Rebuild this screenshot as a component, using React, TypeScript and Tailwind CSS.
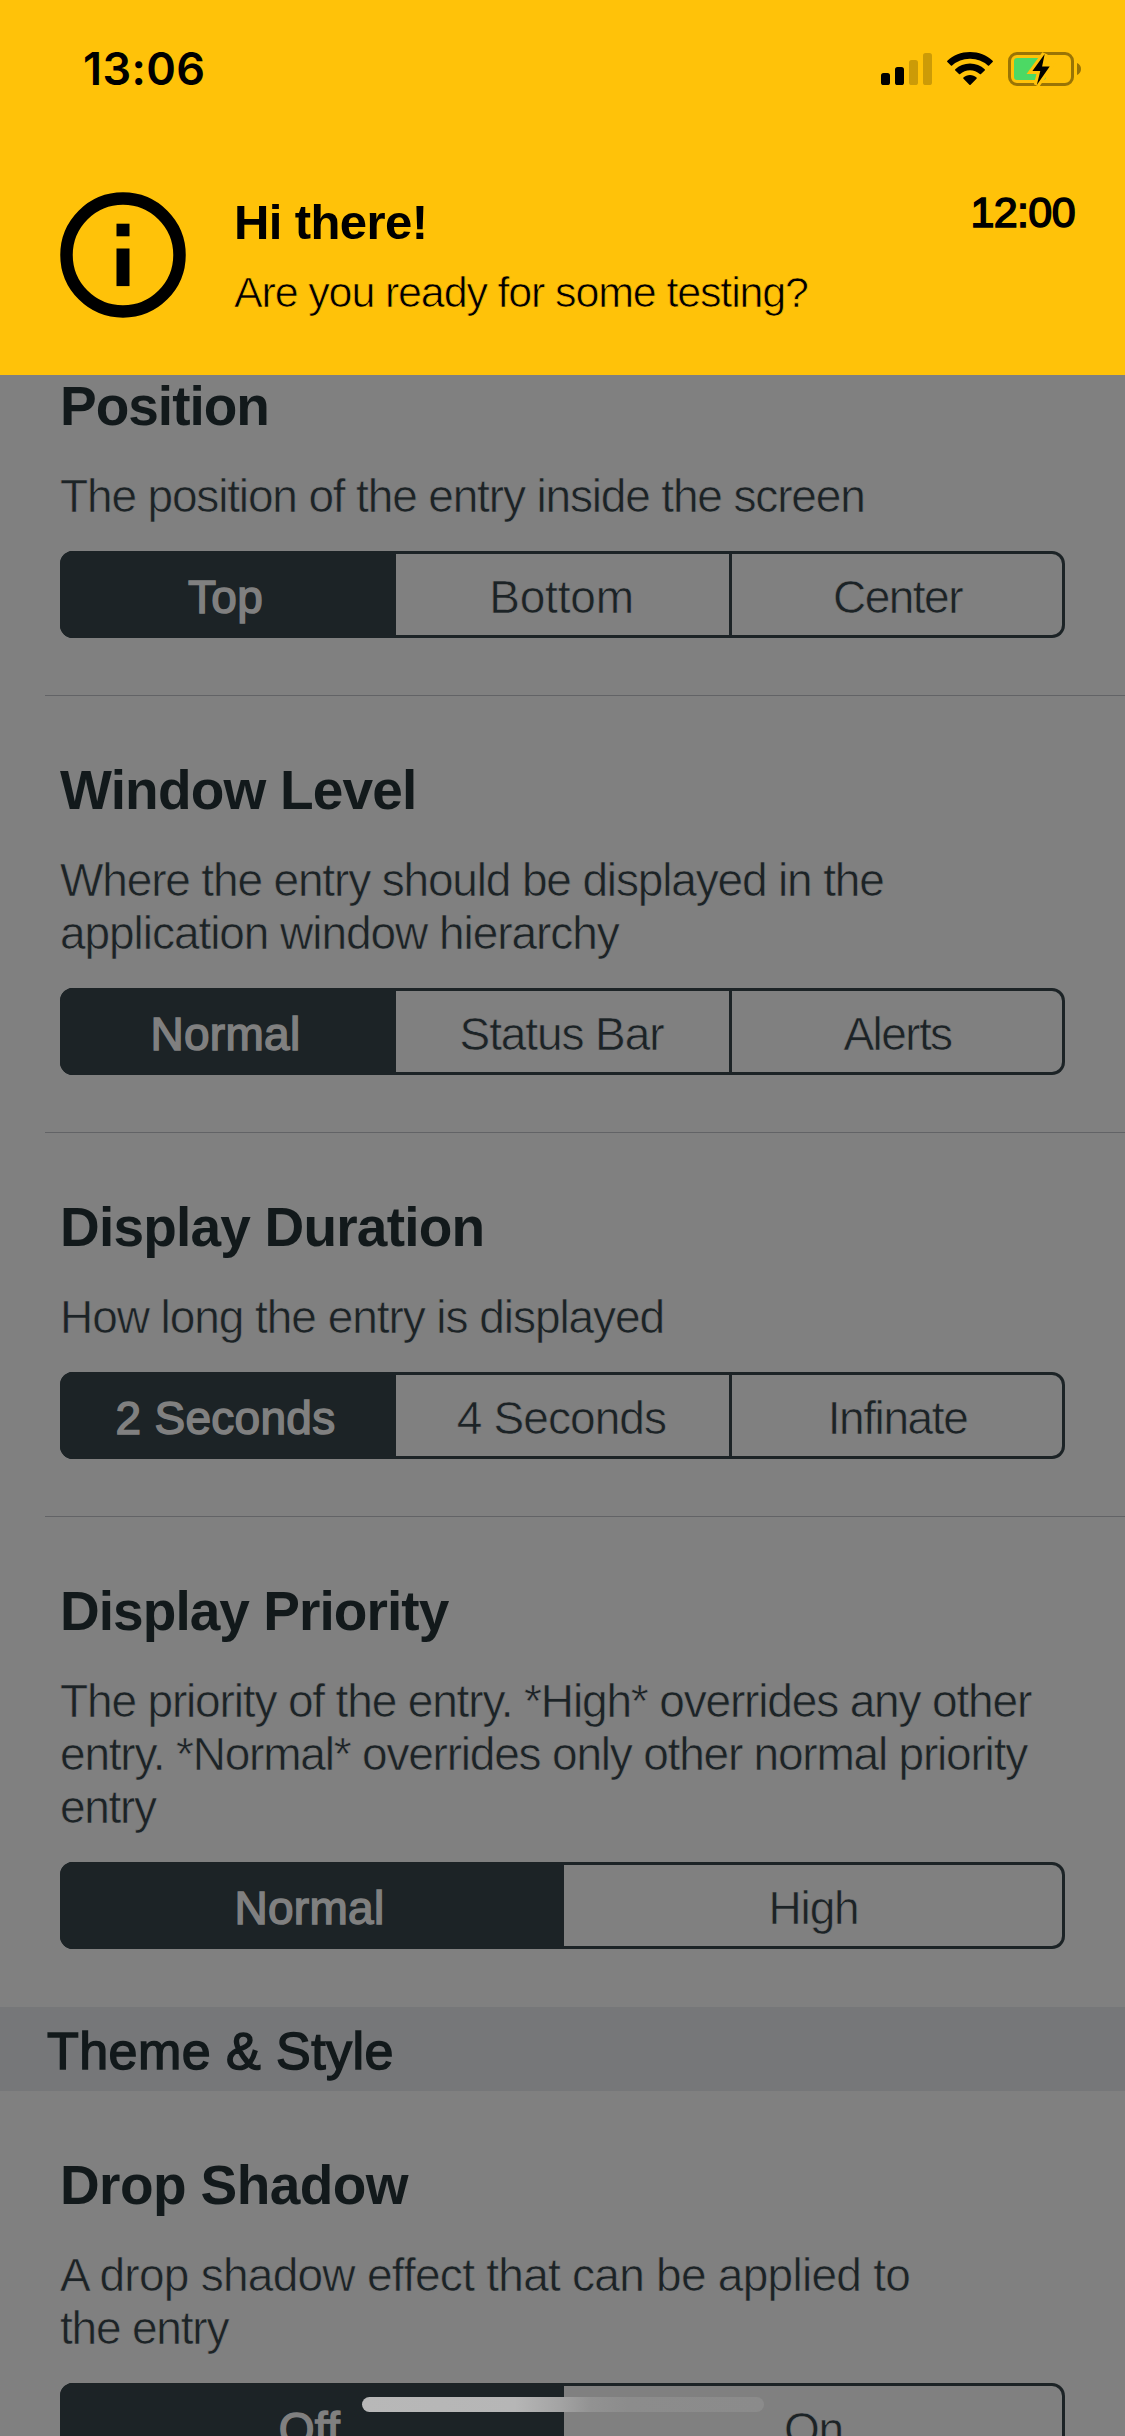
type Option = { label: string; className?: string };

type Line = { text: string; className?: string };

type SettingProps = {
  title: string;
  titleClass?: string;
  lines: Line[];
  options: Option[];
};

// Light weight: the outline is trimmed with a thin stroke in the surface colour.
const lightOnGray = "[-webkit-text-stroke:0.6px_#808080]";
const lightOnYellow = "[-webkit-text-stroke:0.7px_#ffc209]";
// Medium weight: the outline is thickened with a stroke in the text colour.
const medium = "[-webkit-text-stroke:1.5px_currentColor]";

function Segments({ options }: { options: Option[] }) {
  return (
    <div className="mt-[28px] flex h-[87px] w-[1005px] gap-[3px] overflow-hidden rounded-[13px] text-[46px] shadow-[inset_0_0_0_3px_#1c2326]">
      {options.map((option, index) => {
        const base = "flex flex-1 items-center justify-center pt-[5px] pr-[2px] leading-none";
        const state =
          index === 0
            ? `bg-[#1c2326] text-[#808080] shadow-[3px_0_0_#1c2326] tracking-[0.3px] ${medium}`
            : `${lightOnGray} ${index > 1 ? "shadow-[-3px_0_0_#1c2326]" : ""}`;
        return (
          <button key={option.label} type="button" className={`${base} ${state} ${option.className ?? ""}`}>
            {option.label}
          </button>
        );
      })}
    </div>
  );
}

function Setting({ title, titleClass = "tracking-[-0.8px]", lines, options }: SettingProps) {
  return (
    <section className="pt-[64px] pb-[57px] pl-[60px]">
      <h2 className={`text-[55px] leading-[60px] font-bold whitespace-nowrap text-[#12191b] ${titleClass}`}>{title}</h2>
      <p className={`mt-[34px] text-[46px] leading-[53px] whitespace-nowrap ${lightOnGray}`}>
        {lines.map((line) => (
          <span key={line.text} className={`block ${line.className ?? "tracking-[-1.15px]"}`}>
            {line.text}
          </span>
        ))}
      </p>
      <Segments options={options} />
    </section>
  );
}

function Divider() {
  return <div className="ml-[45px] h-px bg-[#626366]" />;
}

function CellularIcon() {
  return (
    <svg className="mt-[53px] h-[32px] w-[51px]" viewBox="0 0 51 32">
      <rect x="0" y="20" width="9" height="12" rx="2.6" />
      <rect x="14" y="14" width="9" height="18" rx="2.6" />
      <rect x="28" y="7" width="9" height="25" rx="2.6" opacity="0.2" />
      <rect x="42" y="0" width="9" height="32" rx="2.6" opacity="0.2" />
    </svg>
  );
}

function WifiIcon() {
  return (
    <svg className="mt-[52px] ml-[15px] h-[33px] w-[46px]" viewBox="0 0 46 33">
      <path d="M23 0C31.8 0 39.7 3.3 45.6 8.8a.9.9 0 0 1 0 1.3l-3.5 3.5a.9.9 0 0 1-1.2 0A26.2 26.2 0 0 0 23 6.8a26.2 26.2 0 0 0-17.9 6.800.9.9 0 0 1-1.2 0L.4 10.1a.9.9 0 0 1 0-1.3C6.3 3.3 14.2 0 23 0Z" />
      <path d="M23 11.6c5.7 0 10.8 2.1 14.7 5.6a.9.9 0 0 1 0 1.3l-3.7 3.6a.9.9 0 0 1-1.2 0A14.6 14.6 0 0 0 23 18.3c-3.8 0-7.2 1.4-9.8 3.8a.9.9 0 0 1-1.2 0l-3.7-3.6a.9.9 0 0 1 0-1.3c3.9-3.5 9-5.6 14.7-5.6Z" />
      <path d="M23 23c2.5 0 4.8.9 6.5 2.4a.9.9 0 0 1 0 1.3l-5.9 6a.9.9 0 0 1-1.2 0l-5.9-6a.9.9 0 0 1 0-1.3C18.2 23.9 20.5 23 23 23Z" />
    </svg>
  );
}

function BatteryIcon() {
  const bolt = "M36.7 2 24.4 19h7.9l-3.5 14 12.9-18.5h-7.6Z";
  return (
    <svg className="mt-[52px] ml-[15px] h-[35px] w-[74px]" viewBox="0 0 74 35">
      <rect x="1.5" y="1.5" width="63" height="31" rx="7.5" fill="none" stroke="#997405" strokeWidth="3" />
      <path d="M69 11v12c2.6-1 4-3.4 4-6s-1.4-5-4-6Z" fill="#997405" />
      <rect x="6" y="6" width="32" height="22" rx="3" fill="#4cd964" />
      <path d={bolt} fill="#ffc209" stroke="#ffc209" strokeWidth="6" strokeLinejoin="miter" />
      <path d={bolt} />
    </svg>
  );
}

function InfoIcon() {
  return (
    <svg className="h-[126px] w-[126px]" viewBox="0 0 126 126">
      <circle cx="63" cy="63" r="56.5" fill="none" stroke="#000" strokeWidth="12.5" />
      <rect x="56.5" y="31.7" width="13" height="12.6" />
      <rect x="56.5" y="56.5" width="13" height="37.6" />
    </svg>
  );
}

export default function App() {
  return (
    <div className="relative h-[2436px] w-[1125px] overflow-hidden bg-[#808080] font-['Liberation_Sans',Arial,sans-serif] text-[#1c2326]">
      <header className="relative z-10 h-[375px] bg-[#ffc209] text-black">
        <div className="flex h-[132px] items-start justify-between pr-[43px] pl-[83px]">
          <span className="mt-[42px] font-['Inter',sans-serif] text-[45px] leading-[54px] font-semibold tracking-[0.4px]">13:06</span>
          <div className="flex items-start">
            <CellularIcon />
            <WifiIcon />
            <BatteryIcon />
          </div>
        </div>
        <div className="flex items-start pr-[50px] pl-[60px]">
          <div className="mt-[60px]">
            <InfoIcon />
          </div>
          <div className="ml-[48px] flex-1 whitespace-nowrap">
            <h1 className="mt-[62px] text-[49px] leading-[56px] font-bold tracking-[-0.6px]">Hi there!</h1>
            <p className={`mt-[17px] text-[43px] leading-[50px] tracking-[-1.15px] ${lightOnYellow}`}>Are you ready for some testing?</p>
          </div>
          <time className={`mt-[55px] text-[43px] leading-[50px] tracking-[-0.6px] ${medium}`}>12:00</time>
        </div>
      </header>

      <main className="-mt-[63px]">
        <Setting
          title="Position"
          titleClass="tracking-[-1px]"
          lines={[{ text: "The position of the entry inside the screen" }]}
          options={[
            { label: "Top" },
            { label: "Bottom", className: "tracking-[-0.2px]" },
            { label: "Center", className: "tracking-[-1.5px]" },
          ]}
        />
        <Divider />
        <Setting
          title="Window Level"
          lines={[
            { text: "Where the entry should be displayed in the" },
            { text: "application window hierarchy", className: "tracking-[-1.05px]" },
          ]}
          options={[
            { label: "Normal" },
            { label: "Status Bar", className: "tracking-[-1.1px]" },
            { label: "Alerts", className: "tracking-[-1.6px]" },
          ]}
        />
        <Divider />
        <Setting
          title="Display Duration"
          lines={[{ text: "How long the entry is displayed", className: "tracking-[-1.05px]" }]}
          options={[
            { label: "2 Seconds" },
            { label: "4 Seconds", className: "tracking-[-0.9px]" },
            { label: "Infinate", className: "tracking-[-1.4px]" },
          ]}
        />
        <Divider />
        <Setting
          title="Display Priority"
          titleClass="tracking-[-0.95px]"
          lines={[
            { text: "The priority of the entry. *High* overrides any other" },
            { text: "entry. *Normal* overrides only other normal priority", className: "tracking-[-1.2px]" },
            { text: "entry", className: "tracking-[-1.3px]" },
          ]}
          options={[{ label: "Normal" }, { label: "High", className: "tracking-[-1.2px]" }]}
        />
        <div className="mt-px flex h-[84px] items-center bg-[#767779] pt-[4px] pl-[47px]">
          <h2 className={`text-[52px] leading-[60px] tracking-[0.45px] text-[#12191b] ${medium}`}>Theme &amp; Style</h2>
        </div>
        <Setting
          title="Drop Shadow"
          titleClass="tracking-[-0.6px]"
          lines={[
            { text: "A drop shadow effect that can be applied to", className: "tracking-[-0.73px]" },
            { text: "the entry", className: "tracking-[-1.2px]" },
          ]}
          options={[{ label: "Off" }, { label: "On", className: "tracking-[-1.2px]" }]}
        />
      </main>

      <div className="absolute bottom-[24px] left-[362px] h-[15px] w-[402px] rounded-full bg-[linear-gradient(90deg,#b8b8b8_0%,#b6b6b6_38%,#a4a4a4_49%,#929292_57%,#8c8c8c_66%,#8b8b8b_100%)]" />
    </div>
  );
}
